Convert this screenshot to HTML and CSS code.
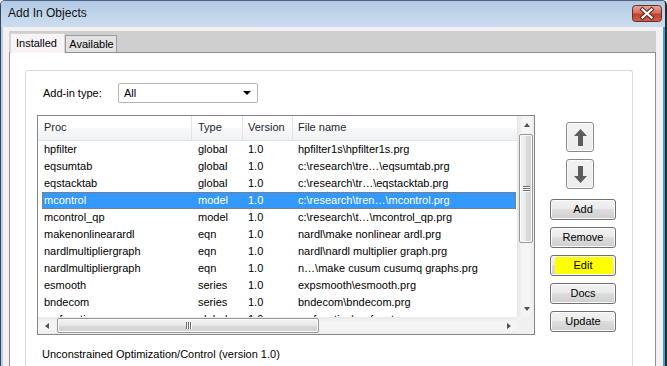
FILE: index.html
```html
<!DOCTYPE html>
<html>
<head>
<meta charset="utf-8">
<link rel="stylesheet" href="styles.css">
</head>
<body>
<div class="window">
  <div class="titlebar">
    <span class="title">Add In Objects</span>
    <span class="close">
      <svg width="30" height="17" viewBox="0 0 30 17">
        <defs>
          <linearGradient id="cg" x1="0" y1="0" x2="0" y2="1">
            <stop offset="0" stop-color="#e9a89d"/>
            <stop offset="0.45" stop-color="#d4705f"/>
            <stop offset="0.55" stop-color="#c0422e"/>
            <stop offset="1" stop-color="#d0634a"/>
          </linearGradient>
        </defs>
        <rect x="0.5" y="0.5" width="29" height="16" rx="3" fill="url(#cg)" stroke="#6b2a22"/>
        <path d="M10.5 4.5 L19.5 12.5 M19.5 4.5 L10.5 12.5" stroke="#5a2a24" stroke-width="4.2" stroke-linecap="square"/>
        <path d="M10.5 4.5 L19.5 12.5 M19.5 4.5 L10.5 12.5" stroke="#ffffff" stroke-width="2.2" stroke-linecap="square"/>
      </svg>
    </span>
  </div>
  <div class="client">
    <div class="tabstrip">
      <div class="tab active">Installed</div>
      <div class="tab">Available</div>
    </div>
    <div class="page">
      <div class="group">
        <div class="typerow">
          <span class="label">Add-in type:</span>
          <div class="combo"><span>All</span><span class="caret"></span></div>
        </div>
        <div class="main">
          <div class="list">
            <div class="view">
              <div class="header">
                <div class="hc">Proc</div>
                <div class="hc">Type</div>
                <div class="hc">Version</div>
                <div class="hc">File name</div>
              </div>
              <div class="row"><span>hpfilter</span><span>global</span><span>1.0</span><span>hpfilter1s\hpfilter1s.prg</span></div>
              <div class="row"><span>eqsumtab</span><span>global</span><span>1.0</span><span>c:\research\tre…\eqsumtab.prg</span></div>
              <div class="row"><span>eqstacktab</span><span>global</span><span>1.0</span><span>c:\research\tr…\eqstacktab.prg</span></div>
              <div class="row selected"><span>mcontrol</span><span>model</span><span>1.0</span><span>c:\research\tren…\mcontrol.prg</span></div>
              <div class="row"><span>mcontrol_qp</span><span>model</span><span>1.0</span><span>c:\research\t…\mcontrol_qp.prg</span></div>
              <div class="row"><span>makenonlinearardl</span><span>eqn</span><span>1.0</span><span>nardl\make nonlinear ardl.prg</span></div>
              <div class="row"><span>nardlmultipliergraph</span><span>eqn</span><span>1.0</span><span>nardl\nardl multiplier graph.prg</span></div>
              <div class="row"><span>nardlmultipliergraph</span><span>eqn</span><span>1.0</span><span>n…\make cusum cusumq graphs.prg</span></div>
              <div class="row"><span>esmooth</span><span>series</span><span>1.0</span><span>expsmooth\esmooth.prg</span></div>
              <div class="row"><span>bndecom</span><span>series</span><span>1.0</span><span>bndecom\bndecom.prg</span></div>
              <div class="row"><span>mafunction</span><span>global</span><span>1.0</span><span>mafunction\mafunct.prg</span></div>
            </div>
            <div class="vscroll">
              <div class="sbtn"><span class="tri up"></span></div>
              <div class="vthumb"><span class="grip-h"></span><span class="grip-h"></span><span class="grip-h"></span></div>
              <div class="sfill"></div>
              <div class="sbtn"><span class="tri down"></span></div>
            </div>
            <div class="hscroll">
              <div class="sbtn"><span class="tri left"></span></div>
              <div class="hthumb"><span class="grip-v"></span><span class="grip-v"></span><span class="grip-v"></span></div>
              <div class="sfill"></div>
              <div class="sbtn"><span class="tri right"></span></div>
            </div>
            <div class="corner"></div>
          </div>
          <div class="buttons">
            <div class="abtn">
              <svg width="13" height="17" viewBox="0 0 13 17"><path d="M6.5 0 L13 7 L9 7 L9 17 L4 17 L4 7 L0 7 Z" fill="#5c5c5c"/></svg>
            </div>
            <div class="abtn">
              <svg width="13" height="17" viewBox="0 0 13 17"><path d="M6.5 17 L13 10 L9 10 L9 0 L4 0 L4 10 L0 10 Z" fill="#5c5c5c"/></svg>
            </div>
            <div class="btn first">Add</div>
            <div class="btn">Remove</div>
            <div class="btn marked"><span class="hl"></span><span class="btext">Edit</span></div>
            <div class="btn">Docs</div>
            <div class="btn">Update</div>
          </div>
        </div>
        <div class="status">Unconstrained Optimization/Control (version 1.0)</div>
      </div>
    </div>
  </div>
</div>
</body>
</html>
```

FILE: styles.css
```css
* { box-sizing: border-box; }
html, body { margin: 0; padding: 0; }
body {
  width: 667px;
  height: 366px;
  overflow: hidden;
  background: #f4f0f4;
  font-family: "Liberation Sans", Arial, sans-serif;
  font-size: 11px;
  color: #000;
}
.window {
  width: 667px;
  height: 366px;
  display: flex;
  flex-direction: column;
  border-left: 1px solid #34465c;
  border-right: 2px solid #2c2c2c;
  border-top: 1px solid #51647b;
  border-top-left-radius: 5px;
  border-top-right-radius: 5px;
  overflow: hidden;
}
.titlebar {
  height: 26px;
  flex: none;
  display: flex;
  align-items: flex-start;
  justify-content: space-between;
  padding-left: 7px;
  background: linear-gradient(#b0c9e3, #c3d7ec 60%, #cbdcee);
}
.title {
  font-size: 12px;
  line-height: 14px;
  padding-top: 5px;
  color: #111;
}
.close {
  width: 30px;
  height: 17px;
  margin-top: 4px;
  margin-right: 3px;
  display: block;
}
.close svg { display: block; }
.client {
  flex: 1;
  display: flex;
  flex-direction: column;
  background: #f4f0f4;
  border-left: 2px solid #b9cfe6;
  border-right: 2px solid #3d9fe0;
  padding: 4px 7px 0 6px;
  min-height: 0;
}
.tabstrip {
  height: 21px;
  flex: none;
  display: flex;
  align-items: flex-end;
  background: #cfcfcf;
  padding-left: 1px;
}
.tab {
  width: 52px;
  height: 17px;
  border: 1px solid #9c9c9c;
  border-bottom: none;
  background: #e2e2e2;
  text-align: center;
  line-height: 17px;
  padding-left: 1px;
}
.tab.active {
  width: 55px;
  height: 20px;
  margin-bottom: -1px;
  position: relative;
  z-index: 1;
  background: #f7f3f7;
  border-color: #d6d6d6;
  line-height: 19px;
  padding-right: 3px;
}
.page {
  flex: 1;
  background: #fff;
  border: 1px solid #8d8f93;
  border-bottom: none;
  min-height: 0;
  display: flex;
  flex-direction: column;
}
.group {
  flex: 1;
  margin: 17px 22px 0 15px;
  border: 1px solid #d3dde7;
  border-bottom: none;
  border-radius: 3px 3px 0 0;
}
.typerow {
  display: flex;
  align-items: center;
  margin-top: 12px;
  padding-left: 17px;
  height: 20px;
}
.label { width: 75px; }
.combo {
  width: 140px;
  height: 20px;
  border: 1px solid #b5b5b5;
  border-radius: 2px;
  display: flex;
  align-items: center;
  justify-content: space-between;
  padding: 0 6px 0 5px;
}
.caret {
  width: 0;
  height: 0;
  border-left: 4px solid transparent;
  border-right: 4px solid transparent;
  border-top: 4px solid #000;
}
.main {
  display: flex;
  margin-top: 12px;
  padding-left: 11px;
}
.list {
  width: 498px;
  height: 220px;
  border: 1px solid #828790;
  display: grid;
  grid-template-columns: 479px 17px;
  grid-template-rows: 201px 17px;
}
.view {
  overflow: hidden;
  white-space: nowrap;
}
.header {
  height: 25px;
  display: grid;
  grid-template-columns: 154px 51px 50px 1fr;
  background: linear-gradient(#ffffff, #ffffff 45%, #f6f7f8 55%, #f1f2f4);
  border-bottom: 1px solid #e2e3e6;
  line-height: 23px;
  color: #1e2530;
}
.hc { padding-left: 5px; border-right: 1px solid #e1e4e8; }
.hc:first-child { padding-left: 6px; }
.hc:nth-child(2) { padding-left: 6px; }
.hc:last-child { border-right: none; }
.row {
  height: 17px;
  line-height: 17px;
  margin: 0 1px 0 4px;
  display: grid;
  grid-template-columns: 150px 51px 50px 1fr;
}
.row span { overflow: hidden; padding-left: 5px; }
.row span:first-child { padding-left: 2px; }
.row span:nth-child(2) { padding-left: 6px; }
.row.selected {
  background: #3399ff;
  color: #fff;
  outline: 1px dotted #b86b1e;
  outline-offset: -1px;
}
.vscroll, .hscroll {
  display: flex;
  background: #f2f2f2;
}
.vscroll {
  flex-direction: column;
  border-left: 1px solid #e6e6e6;
  background: linear-gradient(90deg, #e9e9e9, #f5f5f5 30%, #f5f5f5 70%, #ececec);
}
.hscroll {
  background: linear-gradient(#e9e9e9, #f5f5f5 30%, #f5f5f5 70%, #ececec);
}
.sbtn {
  width: 17px;
  height: 17px;
  flex: none;
  display: flex;
  align-items: center;
  justify-content: center;
}
.sfill { flex: 1; }
.tri { width: 0; height: 0; }
.tri.up { border-left: 3.5px solid transparent; border-right: 3.5px solid transparent; border-bottom: 4px solid #505050; }
.tri.down { border-left: 3.5px solid transparent; border-right: 3.5px solid transparent; border-top: 4px solid #505050; }
.tri.left { border-top: 3.5px solid transparent; border-bottom: 3.5px solid transparent; border-right: 4px solid #505050; }
.tri.right { border-top: 3.5px solid transparent; border-bottom: 3.5px solid transparent; border-left: 4px solid #505050; }
.vthumb {
  height: 109px;
  margin: 1px 1px 0 1px;
  border: 1px solid #979797;
  border-radius: 2px;
  background: linear-gradient(90deg, #f3f3f3, #e9e9e9 50%, #d9d9d9 55%, #d3d3d3);
  box-shadow: inset 0 0 0 1px #fafafa;
  display: flex;
  flex-direction: column;
  align-items: center;
  justify-content: center;
  gap: 1px;
}
.grip-h { width: 7px; height: 1px; background: #6b6b6b; box-shadow: 0 1px 0 #fff; }
.hthumb {
  width: 262px;
  margin: 1px 0 1px 2px;
  border: 1px solid #979797;
  border-radius: 2px;
  background: linear-gradient(#f3f3f3, #e9e9e9 50%, #d9d9d9 55%, #d3d3d3);
  box-shadow: inset 0 0 0 1px #fafafa;
  display: flex;
  align-items: center;
  justify-content: center;
  gap: 1px;
}
.grip-v { width: 1px; height: 7px; background: #6b6b6b; box-shadow: 1px 0 0 #fff; }
.corner { background: #f0f0f0; }
.buttons {
  margin-left: 15px;
  width: 66px;
  padding-top: 7px;
  display: flex;
  flex-direction: column;
  gap: 7px;
}
.abtn {
  width: 28px;
  height: 30px;
  margin-left: 16px;
  border: 1px solid #8a8a8a;
  border-radius: 3px;
  background: linear-gradient(#f2f2f2, #ececec);
  box-shadow: inset 0 0 0 1px #fbfbfb;
  display: flex;
  align-items: center;
  justify-content: center;
}
.abtn svg { display: block; }
.btn {
  width: 66px;
  height: 21px;
  border: 1px solid #707070;
  border-radius: 3px;
  background: linear-gradient(#f2f2f2, #ebebeb 45%, #dddddd 50%, #cfcfcf);
  box-shadow: inset 0 0 0 1px #fcfcfc;
  text-align: center;
  line-height: 19px;
  position: relative;
}
.btn.first { margin-top: 3px; }
.hl {
  position: absolute;
  left: 4px;
  top: 1px;
  width: 58px;
  height: 17px;
  background: #ffff00;
  border-radius: 2px;
  filter: blur(0.6px);
}
.btext { position: relative; }
.status {
  margin-top: 10px;
  padding-left: 16px;
  line-height: 18px;
}
```
